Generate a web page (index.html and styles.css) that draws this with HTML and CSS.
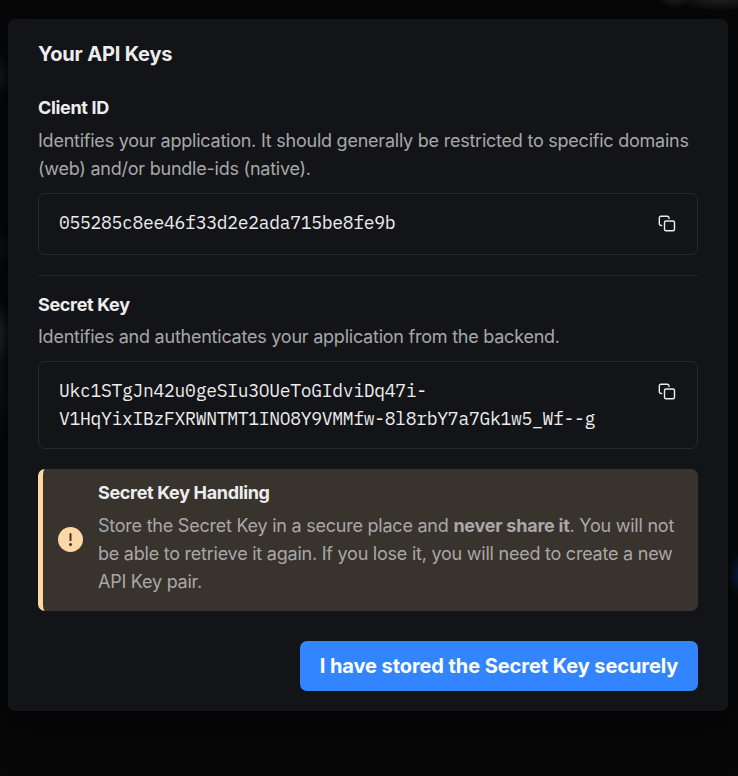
FILE: index.html
```html
<!DOCTYPE html>
<html lang="en">
<head>
<meta charset="utf-8">
<title>API Keys</title>
<link rel="stylesheet" href="styles.css">
</head>
<body>
<main class="modal">
  <h1 class="modal-title">Your API Keys</h1>
  <section class="section">
    <h2 class="label">Client ID</h2>
    <p class="text">Identifies your application. It should generally be restricted to specific domains (web) and/or bundle-ids (native).</p>
    <div class="key-box">
      <code class="key">055285c8ee46f33d2e2ada715be8fe9b</code>
      <button class="copy" aria-label="Copy">
        <svg viewBox="0 0 20 20"><rect x="7.5" y="7" width="10" height="9.8" rx="1.5"/><path d="M4.6 11.5H4A1.7 1.7 0 0 1 2.3 9.8V4A1.7 1.7 0 0 1 4 2.3H10.3A1.7 1.7 0 0 1 12 4V4.5"/></svg>
      </button>
    </div>
  </section>
  <hr class="divider">
  <section class="section">
    <h2 class="label">Secret Key</h2>
    <p class="text">Identifies and authenticates your application from the backend.</p>
    <div class="key-box">
      <code class="key">Ukc1STgJn42u0geSIu3OUeToGIdviDq47i-<br>V1HqYixIBzFXRWNTMT1INO8Y9VMMfw-8l8rbY7a7Gk1w5_Wf--g</code>
      <button class="copy" aria-label="Copy">
        <svg viewBox="0 0 20 20"><rect x="7.5" y="7" width="10" height="9.8" rx="1.5"/><path d="M4.6 11.5H4A1.7 1.7 0 0 1 2.3 9.8V4A1.7 1.7 0 0 1 4 2.3H10.3A1.7 1.7 0 0 1 12 4V4.5"/></svg>
      </button>
    </div>
  </section>
  <aside class="alert">
    <svg class="alert-icon" viewBox="0 0 25 25"><circle class="disc" cx="12.5" cy="12.5" r="12.5"/><path class="bar" d="M12.5 7v6.3"/><circle class="dot" cx="12.5" cy="17.6" r="1.5"/></svg>
    <div class="alert-body">
      <h2 class="label">Secret Key Handling</h2>
      <p class="text">Store the Secret Key in a secure place and <strong>never share it</strong>. You will not be able to retrieve it again. If you lose it, you will need to create a new API Key pair.</p>
    </div>
  </aside>
  <footer class="actions"><button class="primary">I have stored the Secret Key securely</button></footer>
</main>
</body>
</html>
```
FILE: styles.css
```css
* { box-sizing: border-box; }

body {
  margin: 0;
  height: 776px;
  padding: 19px 10px 0 8px;
  overflow: hidden;
  background:
    radial-gradient(ellipse 14px 24px at -3px 75px, #1d1d1d, transparent),
    radial-gradient(ellipse 14px 20px at -3px 249px, #131313, transparent),
    radial-gradient(ellipse 15px 34px at -3px 334px, #292929, transparent),
    radial-gradient(ellipse 14px 60px at -3px 380px, #141414, transparent),
    radial-gradient(ellipse 16px 10px at 674px -2px, #202020, transparent),
    radial-gradient(ellipse 46px 13px at 720px -2px, #222, transparent),
    radial-gradient(ellipse 14px 22px at 740px 574px, #08204a, transparent),
    #070707;
  font-family: Inter, sans-serif;
  font-size: 18px;
  line-height: 28px;
  letter-spacing: -0.235px;
  color: #ededed;
}

.modal {
  height: 692px;
  padding: 20px 30px;
  border-radius: 7px;
  background: #131418;
  box-shadow: 0 12px 40px rgba(0, 0, 0, .6);
}

h1, h2, p { margin: 0; }

.modal-title {
  margin-bottom: 25px;
  font-size: 20px;
  line-height: 30px;
  font-weight: 650;
  letter-spacing: -0.18px;
}

.label {
  margin-bottom: 5px;
  font-size: 18px;
  line-height: 28px;
  font-weight: 650;
  letter-spacing: -0.34px;
}

.text { color: #a8a8a8; }

.key-box {
  display: flex;
  justify-content: space-between;
  margin-top: 10px;
  padding: 15px 20px;
  border: 1px solid #27282b;
  border-radius: 7px;
}

.key {
  font-family: "IBM Plex Mono", "DejaVu Sans Mono", monospace;
  font-size: 18px;
  letter-spacing: -0.29px;
  white-space: nowrap;
}

.copy {
  display: flex;
  align-items: center;
  height: 30px;
  padding: 0;
  border: 0;
  background: none;
}

.copy svg {
  width: 20px;
  height: 20px;
  fill: none;
  stroke: #ededed;
  stroke-width: 1.4;
  stroke-linecap: round;
  stroke-linejoin: round;
}

.divider {
  height: 1px;
  margin: 20px 0 15px;
  border: 0;
  background: #242529;
}

.divider + .section .label { margin-bottom: 4px; }

.alert {
  display: flex;
  gap: 15px;
  margin-top: 20px;
  height: 142px;
  padding: 0 20px 0 15px;
  border-left: 5px solid #ffd6a5;
  border-radius: 7px;
  background: #38332d;
}

.alert-body { padding-top: 10px; }

.alert-icon { flex: none; align-self: center; width: 25px; height: 25px; margin-bottom: 1px; }
.disc { fill: #ffd6a5; }
.bar { stroke: #38332d; stroke-width: 2; stroke-linecap: round; }
.dot { fill: #38332d; }

.actions {
  display: flex;
  justify-content: flex-end;
  margin-top: 30px;
}

.primary {
  width: 398px;
  height: 50px;
  padding: 0;
  border: 0;
  border-radius: 7px;
  background: #3385ff;
  color: #fff;
  font: 650 20px/30px Inter, sans-serif;
  letter-spacing: -0.07px;
  white-space: nowrap;
}
```
